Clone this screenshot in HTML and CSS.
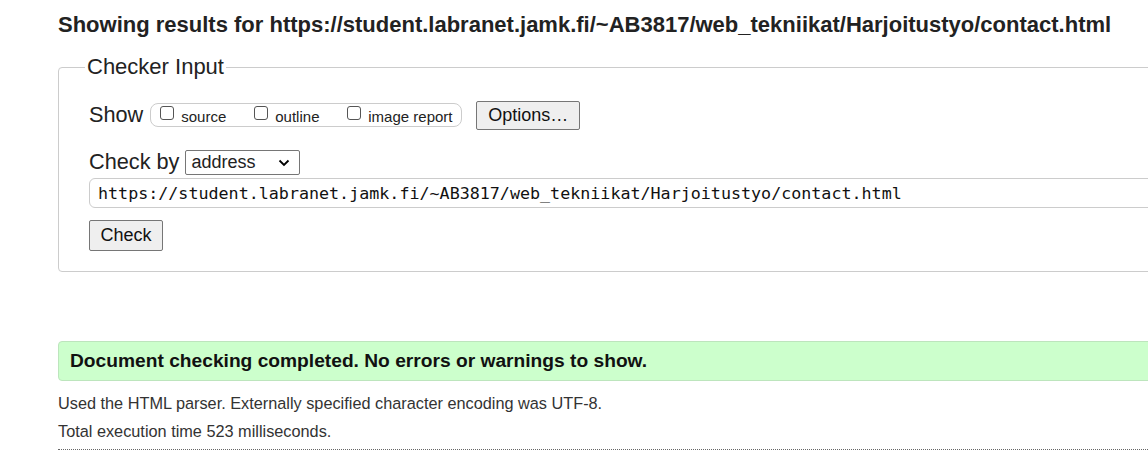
FILE: index.html
```html
<!DOCTYPE html>
<html lang="en">
<head>
<meta charset="utf-8">
<title>Nu Html Checker</title>
<link rel="stylesheet" href="styles.css">
</head>
<body>
<div class="page">
  <h2 class="title">Showing results for https://student.labranet.jamk.fi/~AB3817/web_tekniikat/Harjoitustyo/contact.html</h2>
  <fieldset class="checker">
    <legend class="legend">Checker Input</legend>
    <div class="row show-row">
      <span class="label">Show</span>
      <div class="opts">
        <label class="opt opt-source"><span class="box"></span>source</label>
        <label class="opt opt-outline"><span class="box"></span>outline</label>
        <label class="opt"><span class="box"></span>image report</label>
      </div>
      <button class="btn options">Options…</button>
    </div>
    <div class="row by-row">
      <span class="label">Check by</span>
      <div class="select">address
        <svg class="chev" width="12" height="8" viewBox="0 0 12 8"><path d="M1.5 1.5 L6 6 L10.5 1.5" fill="none" stroke="#000" stroke-width="1.8"/></svg>
      </div>
    </div>
    <div class="url">https://student.labranet.jamk.fi/~AB3817/web_tekniikat/Harjoitustyo/contact.html</div>
    <button class="btn check">Check</button>
  </fieldset>
  <p class="success">Document checking completed. No errors or warnings to show.</p>
  <p class="info">Used the HTML parser. Externally specified character encoding was UTF-8.</p>
  <p class="info">Total execution time 523 milliseconds.</p>
  <hr class="dots">
</div>
</body>
</html>
```
FILE: styles.css
```css
html, body {
  margin: 0;
  padding: 0;
  overflow: hidden;
  background: #fff;
}
body {
  font-family: "Liberation Sans", Arial, sans-serif;
  color: #222;
}
.page {
  width: 1300px;
  padding-left: 58px;
}
.title {
  margin: 0;
  padding-top: 12px;
  font-size: 22px;
  line-height: 26px;
  font-weight: bold;
  color: #222;
  white-space: nowrap;
}
.checker {
  margin: 17px 0 0 0;
  border: 1px solid #ccc;
  border-radius: 4px;
  padding: 0 30px 20px 30px;
  min-width: 0;
}
.legend {
  margin-left: -4px;
  padding: 0 2px;
  font-size: 22px;
  line-height: 24px;
  color: #222;
}
.row {
  display: flex;
  align-items: center;
}
.show-row {
  margin-top: 21px;
  height: 30px;
}
.label {
  font-size: 21.7px;
  color: #222;
}
.opts {
  display: flex;
  align-items: center;
  margin-left: 7px;
  height: 24px;
  width: 312px;
  box-sizing: border-box;
  border: 1px solid #ccc;
  border-radius: 8px;
  padding: 0 0 0 9px;
}
.opt {
  display: flex;
  align-items: center;
  font-size: 15px;
  color: #222;
  padding-top: 2px;
}
.opt-source { width: 94px; }
.opt-outline { width: 93px; }
.box {
  width: 14px;
  height: 14px;
  border: 1px solid #555;
  border-radius: 3px;
  margin-right: 7px;
  margin-top: -6px;
  box-sizing: border-box;
}
.btn {
  font-family: "Liberation Sans", Arial, sans-serif;
  font-size: 18px;
  color: #111;
  background: #efefef;
  border: 1px solid #767676;
  border-radius: 2px;
  padding: 0;
  height: 29px;
}
.options {
  margin-left: 14px;
  width: 104px;
}
.by-row {
  margin-top: 19px;
  height: 26px;
}
.select {
  margin-left: 6px;
  height: 25px;
  width: 115px;
  box-sizing: border-box;
  border: 1px solid #767676;
  border-radius: 2px;
  font-size: 18px;
  display: flex;
  align-items: center;
  padding-left: 5px;
  position: relative;
}
.chev {
  position: absolute;
  right: 9px;
  top: 8px;
}
.url {
  margin-top: 3px;
  height: 30px;
  box-sizing: border-box;
  border: 1px solid #ccc;
  border-radius: 6px;
  padding-left: 8px;
  font-family: "DejaVu Sans Mono", "Liberation Mono", monospace;
  font-size: 16.7px;
  line-height: 28px;
  color: #111;
  width: 1200px;
}
.check {
  margin-top: 12px;
  width: 74px;
  height: 31px;
}
.success {
  margin: 69px 0 0 0;
  height: 40px;
  box-sizing: border-box;
  background: #ccffcc;
  border: 1px solid #bde5bd;
  border-radius: 4px;
  padding-left: 11px;
  font-size: 19.2px;
  font-weight: bold;
  line-height: 38px;
  color: #111;
}
.info {
  margin: 0;
  font-size: 16.3px;
  line-height: 28px;
  color: #333;
}
.success + .info {
  margin-top: 8px;
}
.dots {
  margin: 4px 0 0 0;
  border: 0;
  border-top: 1px dotted #666;
  height: 0;
}
```
